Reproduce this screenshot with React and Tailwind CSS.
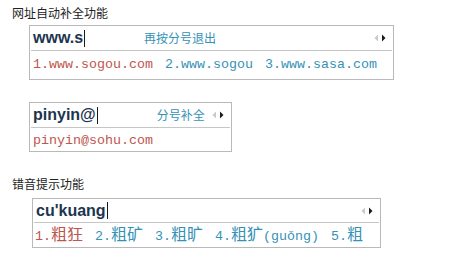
import React from 'react';

// ─── Paging arrows ────────────────────────────────────────────────────────────
function PageArrows() {
    return (
        <svg width="12" height="8" viewBox="0 0 12 8" className="ml-auto mr-[7px] shrink-0">
            <polygon points="4,0.5 0.5,4 4,7.5" fill="#c9c9c9" />
            <polygon points="8,0.5 11.5,4 8,7.5" fill="#1c1c1c" />
        </svg>
    );
}

// ─── Input line: composition + cursor + optional hint ─────────────────────────
function InputLine({ text, hint, height }) {
    return (
        <div className={`flex items-center pl-[3px] ${height}`}>
            <span className="font-['Liberation_Sans',sans-serif] font-bold text-[16px] leading-[18px] text-[#1c3650]">
                {text}
            </span>
            <span className="w-px h-[17px] bg-[#1a1a1a] ml-[1px] shrink-0" />
            {hint && (
                <span className="ml-[59px] text-[12px] leading-[14px] text-[#3592b5] font-['Noto_Sans_CJK_SC',sans-serif]">
                    {hint}
                </span>
            )}
            <PageArrows />
        </div>
    );
}

// ─── Candidate item: mono latin + CJK ─────────────────────────────────────────
const mono = "font-['Liberation_Mono',monospace] text-[13.33px]";
const cjk = "font-['Noto_Sans_CJK_SC',sans-serif] text-[16px]";

function Candidates({ items, height, pad = 'pl-[3px]' }) {
    return (
        <div className={`flex items-center gap-[12px] ${pad} ${height} whitespace-pre leading-[18px]`}>
            {items.map((parts, i) => (
                <span key={i} className={i === 0 ? 'text-[#bd564e]' : 'text-[#3592b5]'}>
                    {parts.map(([kind, s], j) => (
                        <span key={j} className={kind === 'c' ? cjk : mono}>{s}</span>
                    ))}
                </span>
            ))}
        </div>
    );
}

function Box({ className, children }) {
    return (
        <div className={`border border-[#b9b9b9] bg-white flex flex-col ${className}`}>
            {children}
        </div>
    );
}

function Divider() {
    return <div className="mx-[1px] h-px bg-[#c6c6c6]" />;
}

export default function App() {
    return (
        <div className="w-[465px] h-[262px] bg-white overflow-hidden flex flex-col">
            <div className="pl-3 pt-[5px] text-[12px] leading-[16px] text-[#222] font-['Noto_Sans_CJK_SC',sans-serif]">
                网址自动补全功能
            </div>

            <Box className="ml-[29px] mt-[4px] w-[365px]">
                <InputLine text="www.s" hint="再按分号退出" height="h-[24px]" />
                <Divider />
                <Candidates
                    height="h-[28px] pb-[4px]"
                    items={[
                        [['m', '1.www.sogou.com']],
                        [['m', '2.www.sogou']],
                        [['m', '3.www.sasa.com']],
                    ]}
                />
            </Box>

            <Box className="ml-[29px] mt-[22px] w-[203px]">
                <InputLine text="pinyin@" hint="分号补全" height="h-[24px]" />
                <Divider />
                <Candidates height="h-[23px]" items={[[['m', 'pinyin@sohu.com']]]} />
            </Box>

            <div className="pl-3 mt-[24px] text-[12px] leading-[16px] text-[#222] font-['Noto_Sans_CJK_SC',sans-serif]">
                错音提示功能
            </div>

            <Box className="ml-[32px] mt-[6px] w-[349px]">
                <InputLine text="cu'kuang" height="h-[23px]" />
                <Divider />
                <Candidates
                    height="h-[24px]"
                    pad="pl-[2px]"
                    items={[
                        [['m', '1.'], ['c', '粗狂']],
                        [['m', '2.'], ['c', '粗矿']],
                        [['m', '3.'], ['c', '粗旷']],
                        [['m', '4.'], ['c', '粗犷'], ['m', '(guǒng)']],
                        [['m', '5.'], ['c', '粗']],
                    ]}
                />
            </Box>
        </div>
    );
}
